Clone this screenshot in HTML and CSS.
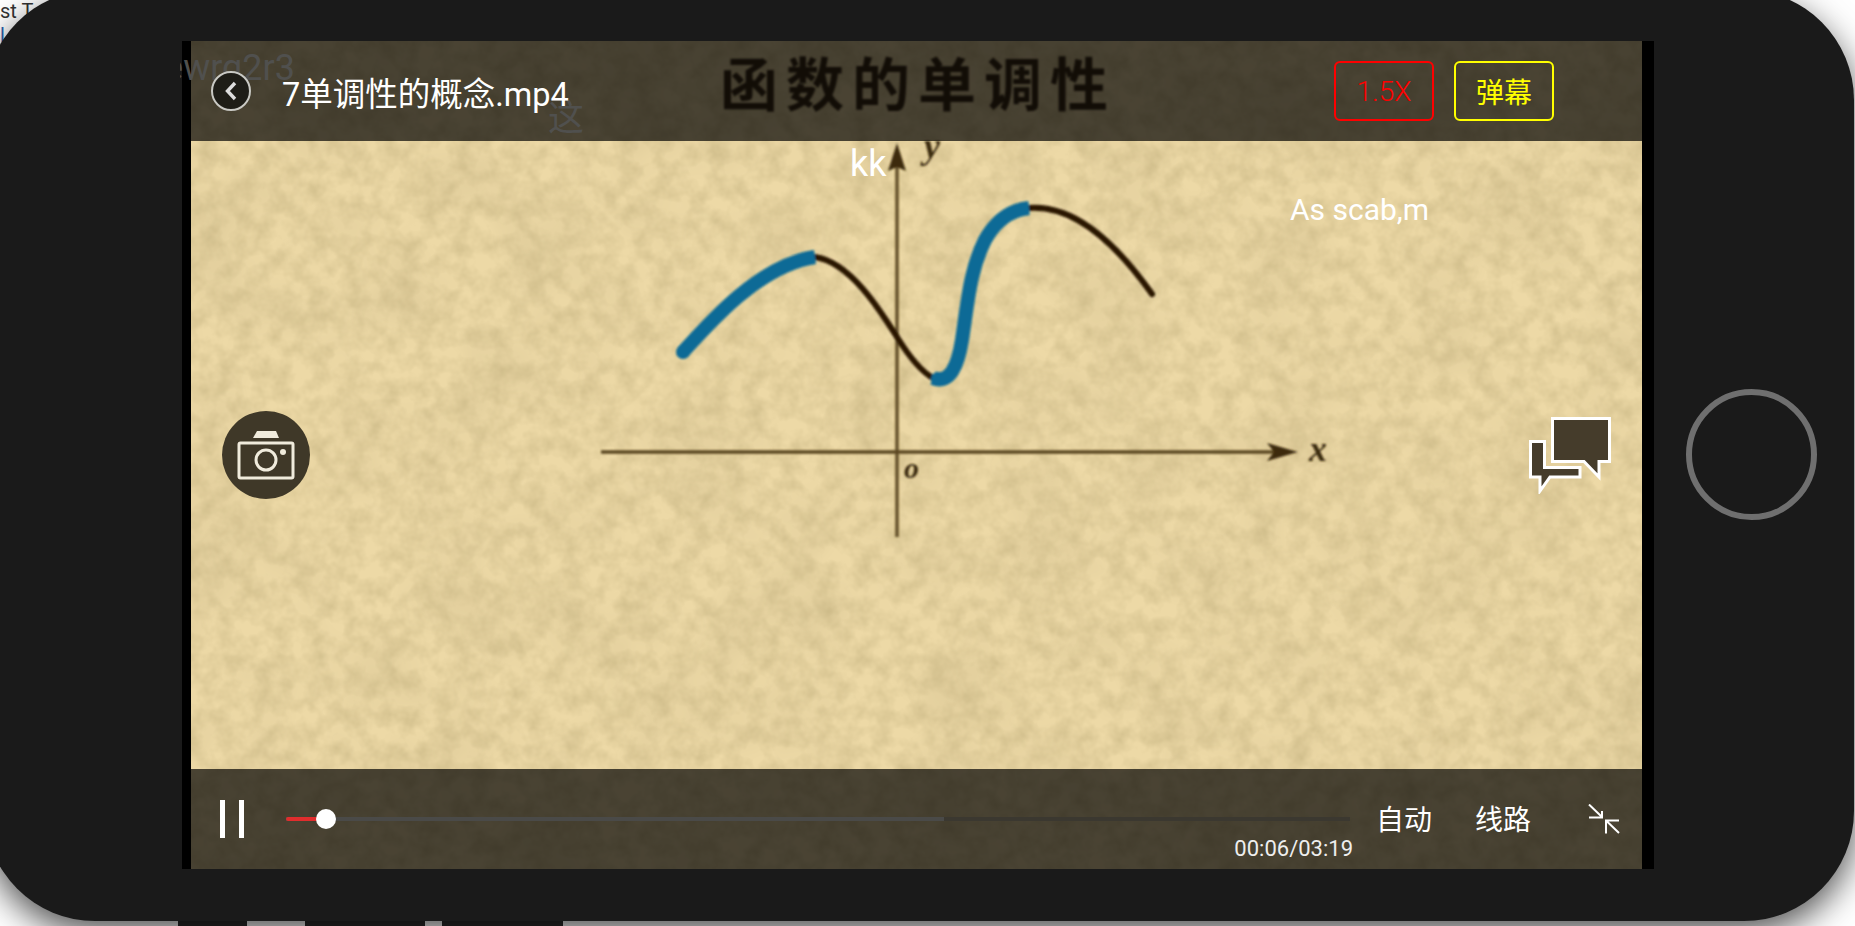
FILE: index.html
```html
<!DOCTYPE html>
<html lang="zh-CN">
<head>
	<meta charset="UTF-8">
	<title>7单调性的概念.mp4</title>
	<link rel="stylesheet" href="styles.css">
</head>
<body>
<div class="behind_text">st T<br><span class="behind_link">l</span></div>

<div class="device">
	<div class="screen">
		<div class="slide">
			<svg class="slide_art" viewBox="191 41 1451 828" xmlns="http://www.w3.org/2000/svg">
				<defs>
					<filter id="paper" x="0" y="0" width="100%" height="100%">
						<feTurbulence type="fractalNoise" baseFrequency="0.055" numOctaves="3" seed="7"/>
						<feColorMatrix type="matrix" values="0 0 0 0 0.45  0 0 0 0 0.36  0 0 0 0 0.16  0.7 0 0 0 -0.23"/>
					</filter>
					<filter id="blotch" x="0" y="0" width="100%" height="100%">
						<feTurbulence type="fractalNoise" baseFrequency="0.012" numOctaves="3" seed="21"/>
						<feColorMatrix type="matrix" values="0 0 0 0 0.5  0 0 0 0 0.4  0 0 0 0 0.2  0.5 0 0 0 -0.19"/>
					</filter>
					<filter id="soft"><feGaussianBlur stdDeviation="0.9"/></filter>
				</defs>
				<rect x="191" y="41" width="1451" height="828" filter="url(#blotch)"/>
				<rect x="191" y="41" width="1451" height="828" filter="url(#paper)"/>
				<g filter="url(#soft)">
					<text class="slide_title" x="720" y="106">函数的单调性</text>
					<path d="M897 165V537" stroke="#63502a" stroke-width="3.5" fill="none"/>
					<path d="M897 143L906 171L897 167L888 171Z" fill="#3c2c10"/>
					<path d="M601 452H1275" stroke="#5a4620" stroke-width="3.5" fill="none"/>
					<path d="M1298 452L1267 443L1274 452L1267 461Z" fill="#3c2c10"/>
					<text class="slide_label" x="924" y="158">y</text>
					<text class="slide_label" x="1309" y="461">x</text>
					<text class="slide_label slide_label_o" x="904" y="478">o</text>
					<path d="M815 257C850 262 880 310 897 337C910 358 922 372 933 378" class="curve_dark"/>
					<path d="M1029 208C1070 205 1110 235 1152 294" class="curve_dark"/>
					<path d="M683 352C710 322 760 265 815 257" class="curve_blue"/>
					<path d="M933 378C950 385 958 365 962 340C968 300 970 270 985 240C995 222 1010 210 1029 208" class="curve_blue"/>
					<circle cx="683" cy="352" r="7" fill="#0a6b96"/>
					<circle cx="938" cy="379" r="7" fill="#0a6b96"/>
				</g>
			</svg>

			<div class="bar_top">
				<span class="back">
					<svg width="14" height="20" viewBox="0 0 14 20"><path d="M11 2L3.5 10L11 18" fill="none" stroke="#ddd" stroke-width="3.4"/></svg>
				</span>
				<span class="video_name">7单调性的概念.mp4</span>
				<span class="top_buttons">
					<span class="btn btn_red">1.5X</span>
					<span class="btn btn_yellow">弹幕</span>
				</span>
			</div>

			<span class="bullet bullet_kk">kk</span>
			<span class="bullet bullet_scab">As scab,m</span>

			<div class="camera">
				<svg width="60" height="52" viewBox="236 426 60 52">
					<path d="M253 435L257 428H276L279 435Z" fill="#f0ebdc"/>
					<rect x="239" y="440" width="54" height="35" rx="1.5" fill="none" stroke="#f0ebdc" stroke-width="3"/>
					<circle cx="266" cy="457" r="10" fill="none" stroke="#f0ebdc" stroke-width="3"/>
					<circle cx="283" cy="449" r="3" fill="#f0ebdc"/>
				</svg>
			</div>

			<svg class="chat" width="90" height="80" viewBox="1526 414 90 80">
				<path d="M1530.500 441.500H1544.500V467.500H1580V477H1550L1540 491V477H1530.500Z" fill="#453c2b" stroke="#fff" stroke-width="3"/>
				<path d="M1552.500 418.500H1609.500V461.500H1599V477L1584 461.500H1552.500Z" fill="#453c2b" stroke="#fff" stroke-width="3"/>
			</svg>

			<div class="bar_bottom">
				<span class="pause"><i></i><i></i></span>
				<div class="progress">
					<span class="progress_buffer"></span>
					<span class="progress_done"></span>
					<span class="progress_thumb"></span>
					<span class="progress_time">00:06/03:19</span>
				</div>
				<span class="ctrl ctrl_auto">自动</span>
				<span class="ctrl ctrl_line">线路</span>
				<svg class="shrink" width="32" height="30" viewBox="1588 804 32 30">
					<path d="M1589 804.500L1602 817M1602 811V817.500H1589M1619 833L1606 820.500M1606 833.500V820.500H1619" fill="none" stroke="#fff" stroke-width="2"/>
				</svg>
			</div>
		</div>

		<div class="danmu danmu_one"><span>ewrg2r3</span></div>
		<span class="danmu_two">这</span>
	</div>
	<div class="home"></div>
</div>

<div class="tabs">
	<span class="tab tab_one"></span>
	<span class="tab tab_two"></span>
	<span class="tab tab_three"></span>
</div>
</body>
</html>
```

FILE: styles.css
```css
html, body{
	margin: 0;
	height: 926px;
	overflow: hidden;
	background: #fff;
	font-family: Roboto, "Noto Sans CJK SC", sans-serif;
}
.behind_text{
	position: absolute;
	left: 0;
	top: -1px;
	font-size: 20px;
	line-height: 24px;
	color: #333;
}
.behind_link{
	color: #2a62b0;
}
.device{
	position: relative;
	box-sizing: border-box;
	display: flex;
	align-items: flex-start;
	width: 1869px;
	height: 931px;
	margin: -10px 0 0 -15px;
	padding: 51px 0 0 197px;
	background: #1a1a1a;
	border-radius: 110px;
	box-shadow: 0 12px 34px rgba(0,0,0,.68);
}
.screen{
	position: relative;
	box-sizing: border-box;
	display: flex;
	width: 1472px;
	height: 828px;
	padding: 0 12px 0 9px;
	background: #000;
}
.slide{
	position: relative;
	flex: 1;
	overflow: hidden;
	background: #edd9a6;
}
.slide_art{
	display: block;
	width: 1451px;
	height: 828px;
}
.slide_title{
	font-family: "Noto Sans CJK SC", sans-serif;
	font-size: 58px;
	font-weight: 700;
	letter-spacing: 8px;
	fill: #3a2c18;
}
.slide_label{
	font-family: "Liberation Serif", serif;
	font-size: 36px;
	font-style: italic;
	font-weight: 700;
	fill: #3a2a10;
}
.slide_label_o{
	font-size: 30px;
}
.curve_dark{
	fill: none;
	stroke: #2a1606;
	stroke-width: 6px;
	stroke-linecap: round;
}
.curve_blue{
	fill: none;
	stroke: #0a6b96;
	stroke-width: 14px;
}
.bar_top{
	position: absolute;
	left: 0;
	top: 0;
	right: 0;
	height: 100px;
	display: flex;
	align-items: center;
	padding: 0 88px 0 20px;
	background: rgba(0,0,0,.69);
}
.back{
	position: relative;
	z-index: 2;
	box-sizing: border-box;
	display: flex;
	align-items: center;
	justify-content: center;
	width: 40px;
	height: 40px;
	margin-right: 32px;
	background: #1e1d17;
	border: 2px solid #c9c9c4;
	border-radius: 50%;
}
.video_name{
	position: relative;
	z-index: 2;
	font-size: 32.5px;
	color: #fff;
	margin-left: -1px;
}
.top_buttons{
	display: flex;
	gap: 20px;
	margin-left: auto;
}
.btn{
	box-sizing: border-box;
	display: flex;
	align-items: center;
	justify-content: center;
	width: 100px;
	height: 60px;
	border: 2px solid;
	border-radius: 6px;
	font-size: 28px;
}
.btn_red{
	color: #f00;
	font-weight: 300;
}
.btn_yellow{
	color: #ff0;
}
.bullet{
	position: absolute;
	color: #fff;
}
.bullet_kk{
	left: 659px;
	top: 102px;
	font-size: 36px;
}
.bullet_scab{
	left: 1099px;
	top: 151px;
	font-size: 30px;
}
.camera{
	position: absolute;
	left: 31px;
	top: 370px;
	display: flex;
	align-items: center;
	justify-content: center;
	width: 88px;
	height: 88px;
	background: #3f3828;
	border-radius: 50%;
}
.chat{
	position: absolute;
	left: 1335px;
	top: 373px;
}
.bar_bottom{
	position: absolute;
	left: 0;
	right: 0;
	bottom: 0;
	height: 100px;
	display: flex;
	align-items: center;
	padding-left: 29px;
	background: rgba(0,0,0,.69);
}
.pause{
	display: flex;
	gap: 14px;
	margin-right: 42px;
}
.pause i{
	display: block;
	width: 5px;
	height: 38px;
	background: #fff;
}
.progress{
	position: relative;
	width: 1064px;
	height: 4px;
	background: #3b3830;
	margin-right: 26px;
}
.progress_buffer{
	position: absolute;
	left: 0;
	top: 0;
	width: 658px;
	height: 4px;
	background: #4a4a48;
}
.progress_done{
	position: absolute;
	left: 0;
	top: 0;
	width: 36px;
	height: 4px;
	background: #e02d2d;
	border-radius: 2px;
}
.progress_thumb{
	position: absolute;
	left: 30px;
	top: -8px;
	width: 20px;
	height: 20px;
	background: #fff;
	border-radius: 50%;
}
.progress_time{
	position: absolute;
	right: -3px;
	top: 20px;
	font-size: 22px;
	line-height: 24px;
	color: #eee;
	white-space: nowrap;
}
.ctrl{
	font-size: 28px;
	color: #fff;
	margin-top: -2px;
}
.ctrl_auto{
	margin-right: 43px;
}
.ctrl_line{
	margin-right: 57px;
}
.danmu{
	position: absolute;
	left: -2px;
	top: 6px;
	display: flex;
	justify-content: flex-end;
	width: 115px;
	overflow: hidden;
	font-size: 36px;
	color: #50504e;
}
.danmu_two{
	position: absolute;
	left: 366px;
	top: 48px;
	font-size: 36px;
	color: #50504e;
}
.home{
	box-sizing: border-box;
	width: 131px;
	height: 131px;
	margin: 348px 0 0 32px;
	border: 6px solid #6f6f6f;
	border-radius: 50%;
}
.tabs{
	display: flex;
	margin-left: 178px;
}
.tab{
	height: 5px;
	background: #2b2b2b;
}
.tab_one{
	width: 69px;
}
.tab_two{
	width: 120px;
	margin-left: 58px;
}
.tab_three{
	width: 121px;
	margin-left: 17px;
}
```
